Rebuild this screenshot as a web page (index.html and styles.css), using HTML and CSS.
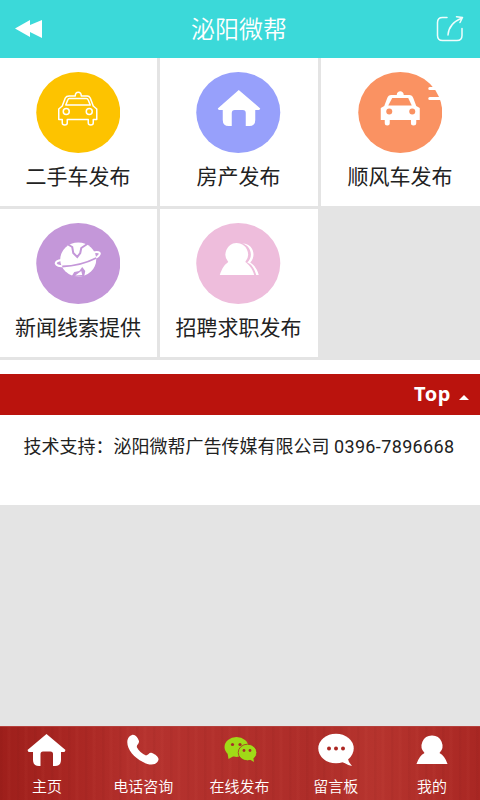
FILE: index.html
```
<!DOCTYPE html>
<html lang="zh-CN">
<head>
<meta charset="utf-8">
<title>泌阳微帮</title>
<link rel="stylesheet" href="styles.css">
</head>
<body>
<header class="header">
  <svg class="back" width="28" height="20" viewBox="0 0 28 20"><path d="M0 9.500 15 1V6L27 1V19L15 13V18Z" fill="#fff"/></svg>
  <h1>泌阳微帮</h1>
  <svg class="share" width="28" height="28" viewBox="0 0 28 28" fill="none" stroke="#effdfc" stroke-width="1.500" stroke-linecap="round" stroke-linejoin="round"><path d="M11 2.500H6.500Q1.500 2.500 1.500 7.500V20.500Q1.500 25.500 6.500 25.500H21Q26 25.500 26 20.500V13.500"/><path d="M12 20C12.500 13 16 7 26 3M20.500 1.800 26.500 2.500 24 7.500"/></svg>
</header>
<main class="grid">
  <a class="tile">
    <svg class="disc" viewBox="0 0 84 81"><ellipse cx="42" cy="40.500" rx="42" ry="40.500" fill="#fdc300"/>
      <g fill="none" stroke="#fff" stroke-width="1.500" stroke-linejoin="round"><path d="M39 24C39 19 45 19 45 24H51Q53 24 54 26L57 34 60.500 37V47.500H57V51Q57 53 54.500 53T52 51V47.500H31V51Q31 53 28.500 53T26 51V47.500H22.500V37L26 34 29 26Q30 24 33 24Z"/><path d="M33 26.500H50Q51.500 26.500 52 28L54 33H29.500L31.500 28Q32 26.500 33 26.500Z"/><circle cx="30" cy="39.500" r="3"/><circle cx="53" cy="39.500" r="3"/></g></svg>
    <span>二手车发布</span>
  </a>
  <a class="tile">
    <svg class="disc" viewBox="0 0 84 81"><ellipse cx="42" cy="40.500" rx="42" ry="40.500" fill="#97a0fb"/><path d="M42.500 18 64 36.500 63 38H59V48Q59 54 53 54H49.500V41Q49.500 38 46.500 38H38.500Q35.500 38 35.500 41V54H32.500Q26.500 54 26.500 48V38H22.500L21.500 36.500Z" fill="#fff"/></svg>
    <span>房产发布</span>
  </a>
  <a class="tile">
    <svg class="disc" viewBox="0 0 84 81"><ellipse cx="42" cy="40.500" rx="42" ry="40.500" fill="#fa9262"/>
      <path d="M38.500 23C38.500 18 45.500 18 45.500 23H51Q54 23 55 26L58 34 61.500 36V48H58V51Q58 53.500 55.300 53.500T52.700 51V48H31.500V51Q31.500 53.500 29 53.500T26.500 51V48H22.500V36L26 34 29 26Q30 23 33 23Z" fill="#fff"/><path d="M34 26H50L53.500 33.500H30Z" fill="#fa9262"/><circle cx="31" cy="39.500" r="3" fill="#fa9262"/><circle cx="54" cy="39.500" r="3" fill="#fa9262"/><path d="M71.500 16.500H84M71.500 26.500H84" stroke="#fff" stroke-width="3" stroke-linecap="round"/></svg>
    <span>顺风车发布</span>
  </a>
  <a class="tile">
    <svg class="disc" viewBox="0 0 84 81"><ellipse cx="42" cy="40.500" rx="42" ry="40.500" fill="#c497d9"/>
      <ellipse cx="42" cy="36.500" rx="18" ry="17" fill="#fff"/><path d="M31 21 36 24 37 30 41 34 44 30 45 25 51 21" fill="none" stroke="#c497d9" stroke-width="2"/><path d="M35 54 38 49 43 48 46 44 49 48 48 53Z" fill="#c497d9"/><path d="M39 52.500 45 48 46 52Z" fill="#fff"/><path d="M25.500 37C17 38 17 43.500 29 43.500C42 43.500 55 38 61 34C66 30 63 28 57 29.500" fill="none" stroke="#fff" stroke-width="2"/><path d="M26 43.500Q44 43 60 35" fill="none" stroke="#c497d9" stroke-width="1.800"/></svg>
    <span>新闻线索提供</span>
  </a>
  <a class="tile">
    <svg class="disc" viewBox="0 0 84 81"><ellipse cx="42" cy="40.500" rx="42" ry="40.500" fill="#eebddc"/>
      <g fill="#fff"><path d="M40 20A11.500 11.500 0 0 0 32 39C28 42 26 45 23.500 52H58C56 45 52 41 49 39A11.500 11.500 0 0 0 40 20Z"/><path d="M46 20.500C56 20 61 32 54 39.500C58 42 61 46 62.500 52H60C58 45 55 41 51 39.500C58 33 54 22 46 20.500Z"/></g></svg>
    <span>招聘求职发布</span>
  </a>
</main>
<section class="top">Top<i class="caret"></i></section>
<footer class="support">技术支持：泌阳微帮广告传媒有限公司 <span class="phone">0396-7896668</span></footer>
<nav class="nav">
  <a><svg viewBox="0 0 40 34"><path d="M19.500 1 38.500 17 37.500 19H34V27Q34 33 28 33H26V21Q26 18.500 23.500 18.500H16Q13.500 18.500 13.500 21V33H12Q6 33 6 27V19H1.500L.5 17Z" fill="#fff"/></svg><span>主页</span></a>
  <a><svg viewBox="0 0 40 34"><path d="M9 2C12 1 15 5 16 8C16.500 11 13 12 14 14.500Q17 20 23 22.500C26 22 26 19 29 20C33 21.500 37 25 35 28C33 32 27 33 20 29C10 24 3 15 4.500 7Q5.500 3 9 2Z" fill="#fff"/></svg><span>电话咨询</span></a>
  <a><svg viewBox="0 0 40 34"><g fill="#a0da17"><ellipse cx="16.500" cy="14" rx="12" ry="10"/><path d="M7.500 20 8.500 26 15.500 22Z"/><ellipse cx="27.500" cy="19.500" rx="9.300" ry="8.300" stroke="#a62d2a" stroke-width=".8"/><path d="M29 26 34 29 33 23Z"/></g><g fill="#a62d2a"><circle cx="12.500" cy="11.500" r="1.600"/><circle cx="20" cy="11.500" r="1.600"/><circle cx="24" cy="17.500" r="1.400"/><circle cx="30" cy="17.500" r="1.400"/></g></svg><span>在线发布</span></a>
  <a><svg viewBox="0 0 40 34"><ellipse cx="20" cy="15.500" rx="17.700" ry="14.800" fill="#fff"/><path d="M25 28 31 23 33 29 36 33Q31 32 25 28Z" fill="#fff"/><g fill="#ac2622"><circle cx="13" cy="15.500" r="2"/><circle cx="20" cy="15.500" r="2"/><circle cx="27" cy="15.500" r="2"/></g></svg><span>留言板</span></a>
  <a><svg viewBox="0 0 40 34"><path d="M20 2.500A10.300 10.300 0 0 0 12.500 20Q7 23 4.500 31H35.500Q33 23 27.500 20A10.300 10.300 0 0 0 20 2.500Z" fill="#fff"/></svg><span>我的</span></a>
</nav>
</body>
</html>
```
FILE: styles.css
```
* { box-sizing: border-box; }
body {
  margin: 0;
  height: 800px;
  display: flex;
  flex-direction: column;
  background: #e4e4e4;
  color: #222;
  font-family: Roboto, "Noto Sans CJK SC", sans-serif;
  overflow: hidden;
}
.header {
  height: 58px;
  flex: none;
  display: flex;
  align-items: center;
  justify-content: space-between;
  padding: 0 16px 1px 15px;
  background: #3bd9d9;
  color: #fff;
}
.header h1 {
  margin: 2px 0 0 -1px;
  font-size: 24px;
  line-height: 36px;
  font-weight: 350;
}
.grid {
  flex: none;
  display: grid;
  grid-template-columns: 157px 158px 159px;
  grid-template-rows: 148px 148px;
  gap: 3px;
  padding-bottom: 3px;
}
.tile {
  display: flex;
  flex-direction: column;
  align-items: center;
  padding: 14px 1px 0 0;
  background: #fff;
}
.disc { width: 84.5px; height: 81px; flex: none; }
.tile span {
  margin-top: 9px;
  font-size: 21px;
  line-height: 31px;
  white-space: nowrap;
}
.top {
  flex: none;
  height: 55px;
  padding: 0 11px 1px 0;
  border-top: 14px solid #fff;
  display: flex;
  align-items: center;
  justify-content: flex-end;
  background: #ba130d;
  color: #fff;
  font: bold 20px/40px "Noto Sans", sans-serif;
  letter-spacing: .6px;
}
.caret {
  margin: 6px 0 0 8px;
  border: 5px solid transparent;
  border-top: 0;
  border-bottom-color: #fff;
}
.support {
  flex: none;
  height: 90px;
  padding: 18px 2px 0 0;
  background: #fff;
  text-align: center;
  font-size: 18px;
  line-height: 28px;
  white-space: nowrap;
}
.phone { letter-spacing: .36px; }
.nav {
  flex: none;
  height: 74px;
  margin-top: auto;
  display: grid;
  grid-template-columns: repeat(5, 96.25px);
  background:
    repeating-linear-gradient(90deg, rgba(70, 0, 0, .04) 0 2px, transparent 3px 7px, rgba(255, 130, 110, .04) 8px 10px, transparent 11px 17px),
    linear-gradient(90deg, #9e1f1b, #ab2824 18%, #b5322e 30%, #ae2d29 65%, #b6342e 78%, #a92723);
  border-top: 1px solid #b5403c;
  color: #fff;
}
.nav a {
  display: flex;
  flex-direction: column;
  align-items: center;
  padding: 6px 2px 0 0;
}
.nav svg { width: 40px; height: 34px; }
.nav span { margin-top: 9px; font-size: 15px; line-height: 22px; font-weight: 350; }
```
